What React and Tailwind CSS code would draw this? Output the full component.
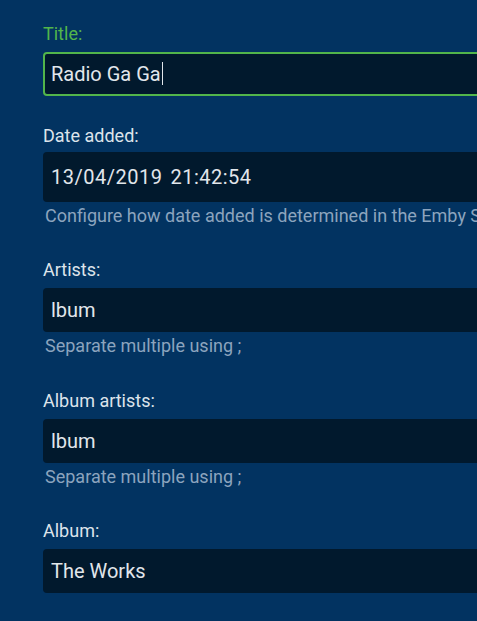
import React from 'react';

const fields = [
    { label: 'Date added:', value: '13/04/2019 21:42:54', help: 'Configure how date added is determined in the Emby Server dashboard under Library settings', tall: true },
    { label: 'Artists:', value: 'lbum', help: 'Separate multiple using ;' },
    { label: 'Album artists:', value: 'lbum', help: 'Separate multiple using ;' },
    { label: 'Album:', value: 'The Works' },
];

const Field = ({ label, value, help, tall }) => (
    <div>
        <div className={`h-[24px] leading-[24px] text-[18px] text-[#dde4eb] whitespace-nowrap ${tall ? 'mb-[4px]' : 'mb-[6px]'}`}>
            {label}
        </div>
        <div className={`w-[620px] ${tall ? 'h-[50px] tracking-[0.5px]' : 'h-[44px]'} flex items-center rounded-[4px] bg-[#01192d] border-2 border-transparent px-[6px] text-[20px] text-[#e1e6eb] whitespace-nowrap`}>
            {tall ? (
                <>
                    <span>{value.split(' ')[0]}</span>
                    <span className="ml-[8px]">{value.split(' ')[1]}</span>
                </>
            ) : value}
        </div>
        {help && (
            <div className="mt-[3px] pl-[2px] h-[22px] leading-[22px] text-[18px] text-[#8ca4be] whitespace-nowrap">
                {help}
            </div>
        )}
    </div>
);

const App = () => {
    return (
        <div className="w-[477px] h-[621px] overflow-hidden bg-[#023361] font-['Roboto','Liberation_Sans',sans-serif]">
            <div className="pl-[43px] pt-[21.5px]">
                {/* Title (focused) */}
                <div>
                    <div className="h-[24px] leading-[24px] text-[18px] text-[#52b54b] mb-[6px]">Title:</div>
                    <div className="w-[620px] h-[44px] flex items-center rounded-[4px] bg-[#01192d] border-2 border-[#52b54b] px-[6px] text-[20px] text-[#e1e6eb] whitespace-nowrap">
                        <span>Radio Ga Ga</span>
                        <span className="inline-block w-[1px] h-[23px] bg-[#e1e6eb] ml-[1px]"></span>
                    </div>
                </div>

                <div className="mt-[28px]">
                    <Field {...fields[0]} />
                </div>
                {fields.slice(1).map((f) => (
                    <div key={f.label} className="mt-[31.5px]">
                        <Field {...f} />
                    </div>
                ))}
            </div>
        </div>
    );
};

export default App;
